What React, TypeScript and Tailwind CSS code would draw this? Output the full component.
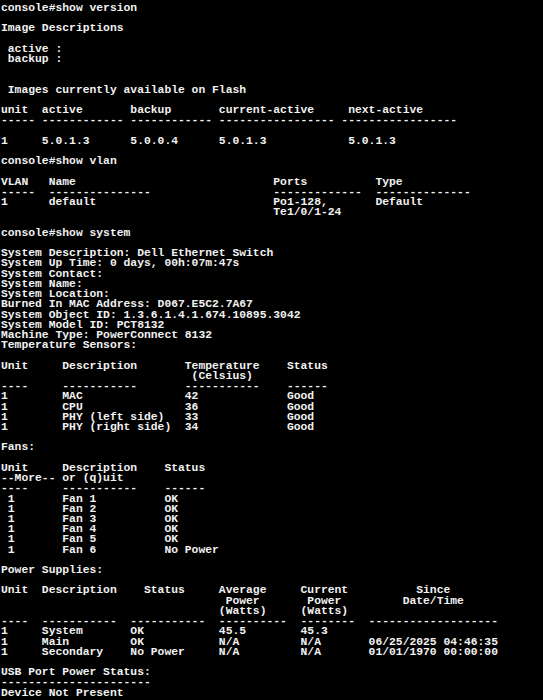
import React from "react";

type Part = [number, string];

function row(parts: Part[]): string {
  let s = "";
  for (const [col, text] of parts) {
    if (s.length < col) s = s + " ".repeat(col - s.length);
    s = s + text;
  }
  return s;
}

function dash(groups: [number, number][]): string {
  return row(groups.map(([c, n]) => [c, "-".repeat(n)] as Part));
}

const lines: string[] = [
  "console#show version",
  "",
  "Image Descriptions",
  "",
  " active :",
  " backup :",
  "",
  "",
  " Images currently available on Flash",
  "",
  row([[0, "unit"], [6, "active"], [19, "backup"], [32, "current-active"], [51, "next-active"]]),
  dash([[0, 5], [6, 12], [19, 12], [32, 17], [50, 17]]),
  "",
  row([[0, "1"], [6, "5.0.1.3"], [19, "5.0.0.4"], [32, "5.0.1.3"], [51, "5.0.1.3"]]),
  "",
  "console#show vlan",
  "",
  row([[0, "VLAN"], [7, "Name"], [40, "Ports"], [55, "Type"]]),
  dash([[0, 5], [7, 15], [40, 13], [55, 14]]),
  row([[0, "1"], [7, "default"], [40, "Po1-128,"], [55, "Default"]]),
  row([[40, "Te1/0/1-24"]]),
  "",
  "console#show system",
  "",
  "System Description: Dell Ethernet Switch",
  "System Up Time: 0 days, 00h:07m:47s",
  "System Contact:",
  "System Name:",
  "System Location:",
  "Burned In MAC Address: D067.E5C2.7A67",
  "System Object ID: 1.3.6.1.4.1.674.10895.3042",
  "System Model ID: PCT8132",
  "Machine Type: PowerConnect 8132",
  "Temperature Sensors:",
  "",
  row([[0, "Unit"], [9, "Description"], [27, "Temperature"], [42, "Status"]]),
  row([[28, "(Celsius)"]]),
  dash([[0, 4], [9, 11], [27, 11], [42, 6]]),
  row([[0, "1"], [9, "MAC"], [27, "42"], [42, "Good"]]),
  row([[0, "1"], [9, "CPU"], [27, "36"], [42, "Good"]]),
  row([[0, "1"], [9, "PHY (left side)"], [27, "33"], [42, "Good"]]),
  row([[0, "1"], [9, "PHY (right side)"], [27, "34"], [42, "Good"]]),
  "",
  "Fans:",
  "",
  row([[0, "Unit"], [9, "Description"], [24, "Status"]]),
  "--More-- or (q)uit",
  dash([[0, 4], [9, 11], [24, 6]]),
  row([[1, "1"], [9, "Fan 1"], [24, "OK"]]),
  row([[1, "1"], [9, "Fan 2"], [24, "OK"]]),
  row([[1, "1"], [9, "Fan 3"], [24, "OK"]]),
  row([[1, "1"], [9, "Fan 4"], [24, "OK"]]),
  row([[1, "1"], [9, "Fan 5"], [24, "OK"]]),
  row([[1, "1"], [9, "Fan 6"], [24, "No Power"]]),
  "",
  "Power Supplies:",
  "",
  row([[0, "Unit"], [6, "Description"], [21, "Status"], [32, "Average"], [44, "Current"], [61, "Since"]]),
  row([[33, "Power"], [45, "Power"], [59, "Date/Time"]]),
  row([[32, "(Watts)"], [44, "(Watts)"]]),
  dash([[0, 4], [6, 11], [19, 11], [32, 10], [44, 8], [54, 19]]),
  row([[0, "1"], [6, "System"], [19, "OK"], [32, "45.5"], [44, "45.3"]]),
  row([[0, "1"], [6, "Main"], [19, "OK"], [32, "N/A"], [44, "N/A"], [54, "06/25/2025 04:46:35"]]),
  row([[0, "1"], [6, "Secondary"], [19, "No Power"], [32, "N/A"], [44, "N/A"], [54, "01/01/1970 00:00:00"]]),
  "",
  "USB Port Power Status:",
  "-".repeat(22),
  "Device Not Present",
];

export default function App() {
  return (
    <div className="w-full h-[700px] bg-black overflow-hidden">
      <pre className="m-0 pt-[3px] ml-[1px] font-['Liberation_Mono','DejaVu_Sans_Mono',monospace] font-bold text-[11.35px] leading-[10.22px] text-[#f2f2f2] whitespace-pre">
        {lines.join("\n")}
      </pre>
    </div>
  );
}
